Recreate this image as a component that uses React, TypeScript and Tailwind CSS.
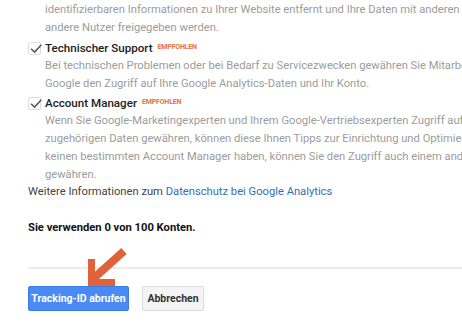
import React from 'react'

function Check() {
  return (
    <span className="relative mt-[3px] flex h-[13px] w-[13px] shrink-0 items-center justify-center rounded-[2px] border border-[#dedede] bg-white">
      <svg viewBox="0 0 14 14" className="absolute -top-[1px] left-[0px] h-[14px] w-[14px]" fill="none">
        <path d="M2.6 7.3 L5.6 10.1 L11.8 3.4" stroke="#555" strokeWidth="1.5" strokeLinecap="square" />
      </svg>
    </span>
  )
}

function Badge() {
  return (
    <span className="relative -top-[3px] ml-[5px] text-[7px] font-bold leading-none tracking-tight text-[#e8703f]">
      EMPFOHLEN
    </span>
  )
}

export default function App() {
  return (
    <div
      className="relative h-[334px] w-[462px] overflow-hidden bg-white text-[11.2px] leading-[18px]"
      style={{ fontFamily: 'Roboto, "Open Sans", sans-serif' }}
    >
      <div className="pl-[28px] pt-[1px]">
        <div className="whitespace-nowrap pl-[17px] text-[#9c9c9c]">
          <div>identifizierbaren Informationen zu Ihrer Website entfernt und Ihre Daten mit anderen anderen</div>
          <div>andere Nutzer freigegeben werden.</div>
        </div>

        <div className="mt-[2px] flex gap-[4px]">
          <Check />
          <div className="whitespace-nowrap">
            <div className="h-[18px] text-[11.6px] font-medium text-[#222]">
              Technischer Support
              <Badge />
            </div>
            <div className="text-[#9c9c9c]">
              <div>Bei technischen Problemen oder bei Bedarf zu Servicezwecken gewähren Sie Mitarbeitern von</div>
              <div>Google den Zugriff auf Ihre Google Analytics-Daten und Ihr Konto.</div>
            </div>
          </div>
        </div>

        <div className="mt-[1px] flex gap-[4px]">
          <Check />
          <div className="whitespace-nowrap">
            <div className="h-[18px] text-[11.6px] font-medium text-[#222]">
              Account Manager
              <Badge />
            </div>
            <div className="text-[#9c9c9c]">
              <div>Wenn Sie Google-Marketingexperten und Ihrem Google-Vertriebsexperten Zugriff auf Ihre</div>
              <div>zugehörigen Daten gewähren, können diese Ihnen Tipps zur Einrichtung und Optimierung geben.</div>
              <div>keinen bestimmten Account Manager haben, können Sie den Zugriff auch einem anderen</div>
              <div>gewähren.</div>
            </div>
          </div>
        </div>

        <div className="-mt-[1px] whitespace-nowrap text-[#444]">
          Weitere Informationen zum <span className="text-[#2f6fb8]">Datenschutz bei Google Analytics</span>
        </div>

        <div className="mt-[18px] whitespace-nowrap font-bold text-[#111]">
          Sie verwenden 0 von 100 Konten.
        </div>

        <div className="mt-[30px] h-[2px] bg-[#ececec]" />

        <div className="mt-[17px] flex gap-[13px]">
          <button className="h-[25px] w-[101px] rounded-[2px] border border-[#3b7de6] bg-[#4a8af4] text-[10.5px] font-bold text-white">
            Tracking-ID abrufen
          </button>
          <button className="h-[25px] w-[62px] rounded-[2px] border border-[#dcdcdc] bg-[#f4f4f4] text-[10.5px] font-bold text-[#333]">
            Abbrechen
          </button>
        </div>
      </div>

      <svg className="absolute left-[84px] top-[247px]" width="46" height="40" viewBox="0 0 46 40" fill="none">
        <path d="M40 4 L10 31" stroke="#e0613a" strokeWidth="8" strokeLinecap="butt" />
        <path d="M7.5 12 L7.5 35.5 L31 35.5" stroke="#e0613a" strokeWidth="7" strokeLinejoin="miter" />
      </svg>
    </div>
  )
}
